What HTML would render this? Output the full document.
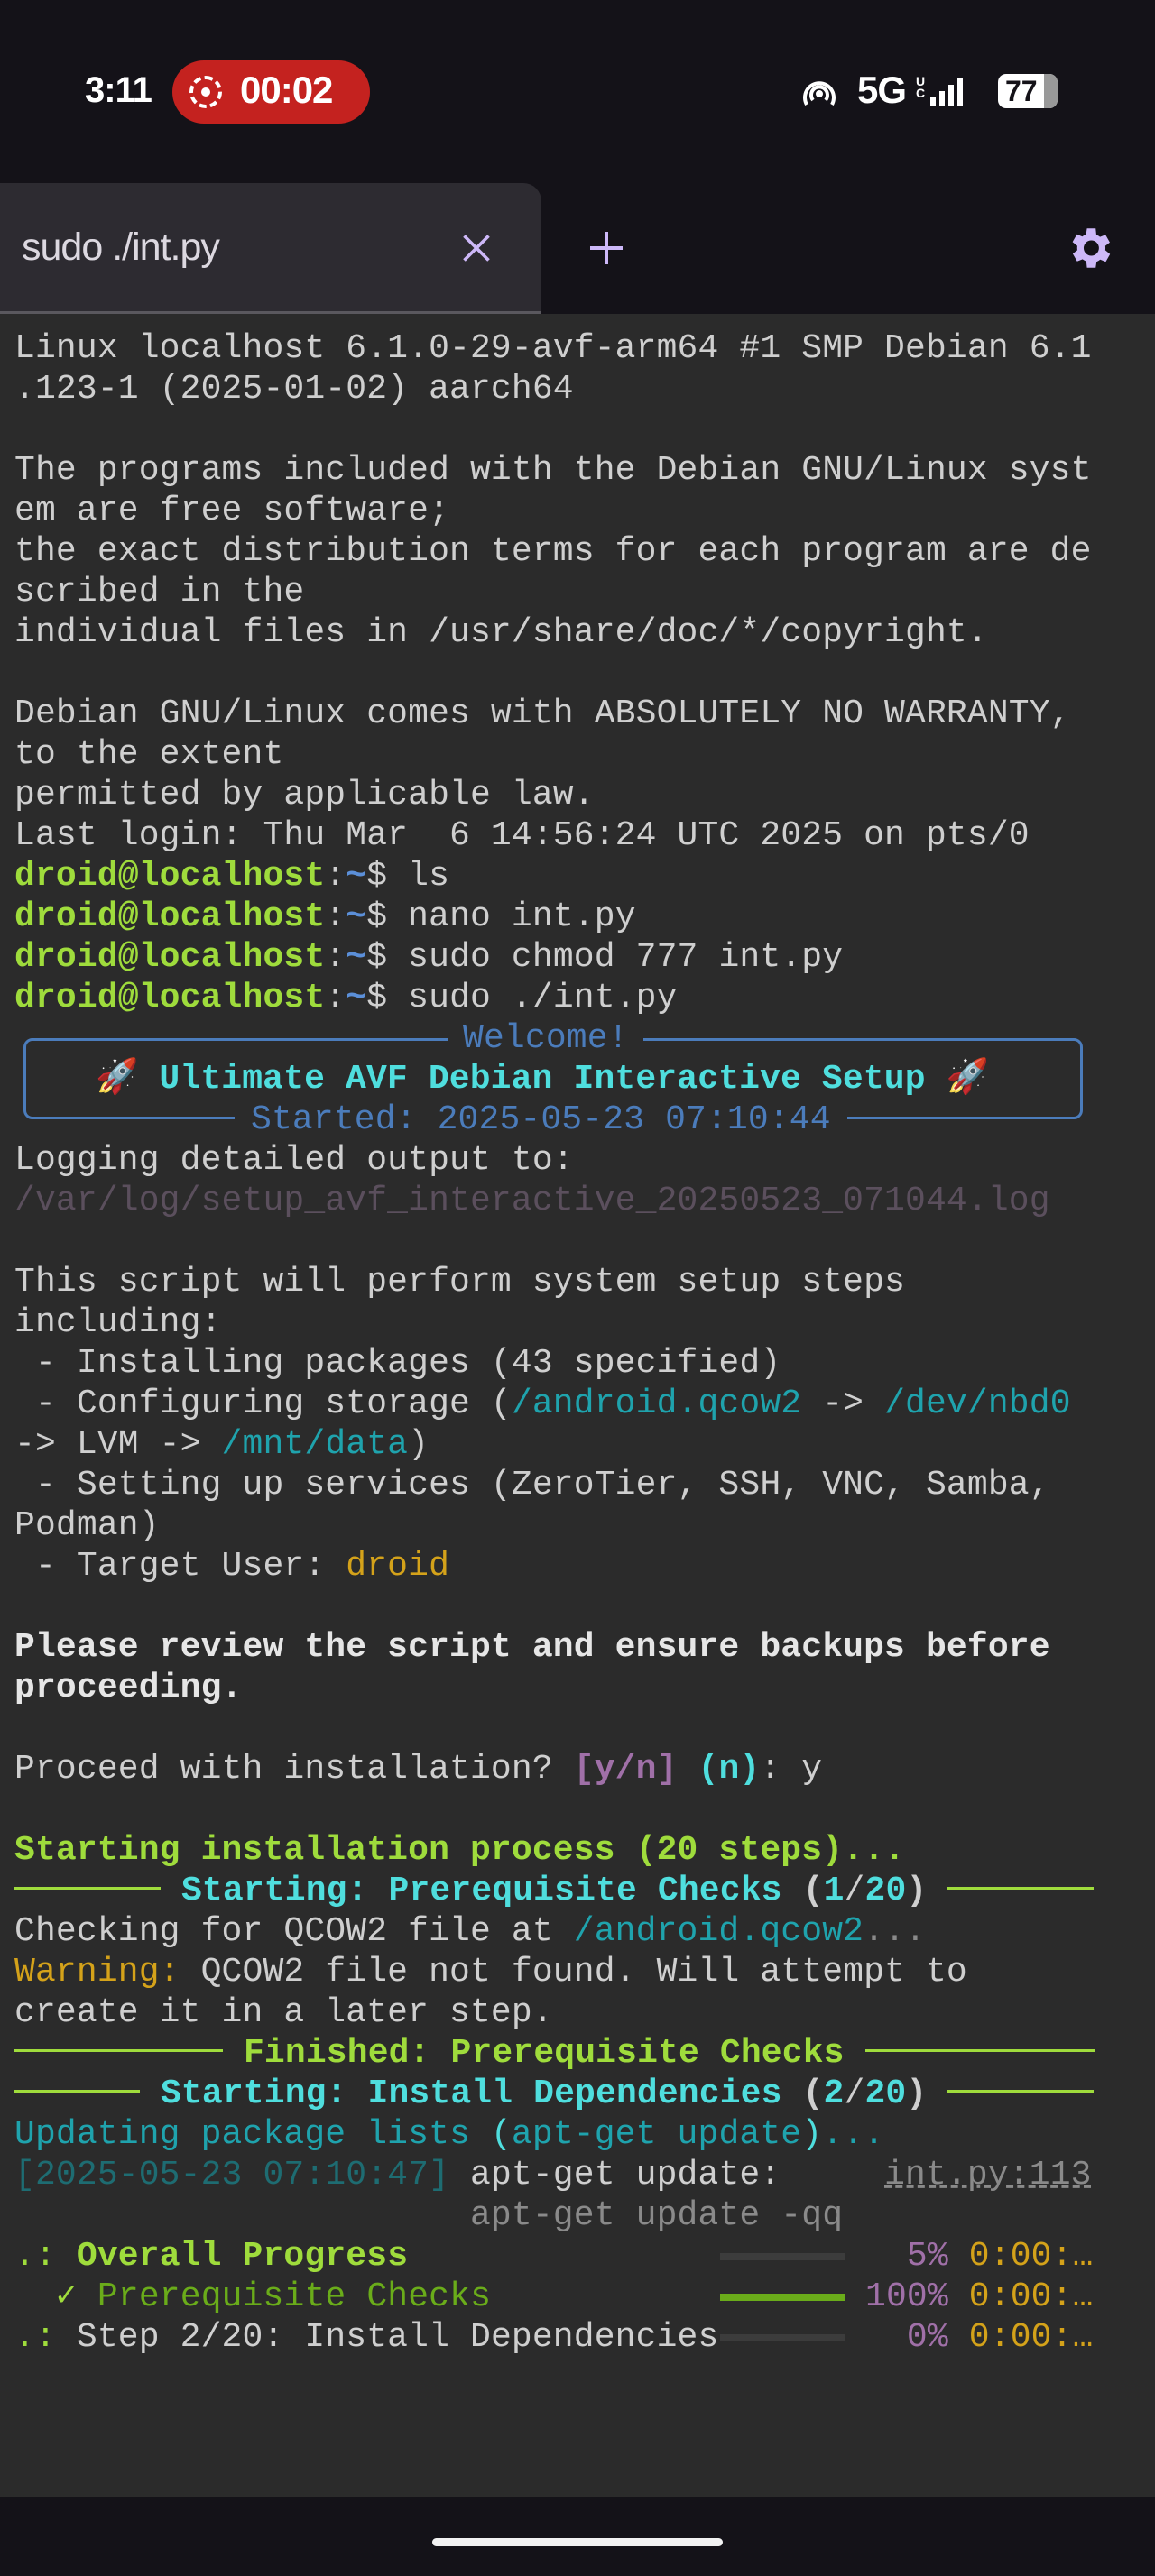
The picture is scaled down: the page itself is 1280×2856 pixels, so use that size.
<!DOCTYPE html>
<html><head><meta charset="utf-8"><style>
*{margin:0;padding:0;box-sizing:border-box}
body{width:1280px;height:2856px;background:#141218;position:relative;overflow:hidden;font-family:"Liberation Mono",monospace}
.term{position:absolute;left:0;top:348px;width:1280px;height:2420px;background:#2b2b2b}
.lines{position:absolute;left:16px;top:16px;}
.l{height:45px;line-height:45px;font-size:38px;letter-spacing:0.15px;white-space:pre;color:#cfcfcf;position:relative;width:1200px}
.g{color:#9fdc3c}.b{font-weight:bold}.c{color:#4fdede}.t{color:#1fa3ad}.y{color:#d4a21a}.p{color:#a070a8}.d{color:#5b4f5d}.bl{color:#4b7cbb}.dg{color:#8a8a8a}.dt{color:#1e6c72}.gg{color:#6aac1a}
.rule{display:inline-block;height:3px;background:#9fdc3c;vertical-align:middle;position:relative;top:-2px}
.bar{position:absolute;top:19px;left:782px;width:138px;height:8px;background:#3c3c3c}
</style></head><body>
<!-- status bar -->
<div style="position:absolute;left:94px;top:78px;font:bold 40px 'Liberation Sans',sans-serif;color:#fff;letter-spacing:-1px">3:11</div>
<div style="position:absolute;left:191px;top:67px;width:219px;height:70px;border-radius:35px;background:#c4221f"></div>
<div style="position:absolute;left:210px;top:84px;width:36px;height:36px;border-radius:50%;border:4px dashed #fff"></div>
<div style="position:absolute;left:223px;top:97px;width:10px;height:10px;border-radius:50%;background:#fff"></div>
<div style="position:absolute;left:266px;top:76px;font:bold 42px 'Liberation Sans',sans-serif;color:#fff;letter-spacing:-1px">00:02</div>
<svg style="position:absolute;left:888px;top:82px" width="40" height="40" viewBox="0 0 40 40" fill="none" stroke="#fff" stroke-width="4"><path d="M6 34A16 16 0 1 1 34 34"/><path d="M13 29A9 9 0 1 1 27 29"/><circle cx="20" cy="22" r="2" fill="#fff"/></svg>
<div style="position:absolute;left:950px;top:76px;font:bold 42px 'Liberation Sans',sans-serif;color:#fff;letter-spacing:-1px">5G</div>
<div style="position:absolute;left:1015px;top:84px;font:bold 14px 'Liberation Sans';color:#fff;line-height:13px">U<br>C</div>
<div style="position:absolute;left:1031px;top:108px;width:6px;height:10px;background:#fff"></div>
<div style="position:absolute;left:1041px;top:101px;width:6px;height:17px;background:#fff"></div>
<div style="position:absolute;left:1051px;top:94px;width:6px;height:24px;background:#fff"></div>
<div style="position:absolute;left:1061px;top:86px;width:6px;height:32px;background:#fff"></div>
<div style="position:absolute;left:1106px;top:82px;width:66px;height:38px;border-radius:9px;background:#fff;font:bold 32px 'Liberation Sans';color:#141218;padding-left:8px;line-height:38px">77</div>
<div style="position:absolute;left:1157px;top:82px;width:15px;height:38px;border-radius:0 9px 9px 0;background:#999"></div>
<!-- tab -->
<div style="position:absolute;left:0;top:203px;width:600px;height:145px;background:#2d2b31;border-radius:0 20px 0 0;border-bottom:3px solid #5a585e"></div>
<div style="position:absolute;left:24px;top:250px;font:43px 'Liberation Sans',sans-serif;color:#dcd8e0;letter-spacing:-1px">sudo ./int.py</div>
<svg style="position:absolute;left:510px;top:257px" width="36" height="36" viewBox="0 0 40 40" stroke="#cdb8f8" stroke-width="4"><path d="M5 5L35 35M35 5L5 35"/></svg>
<svg style="position:absolute;left:652px;top:255px" width="40" height="40" viewBox="0 0 40 40" stroke="#cdb8f8" stroke-width="4"><path d="M20 2V38M2 20H38"/></svg>
<svg style="position:absolute;left:1178px;top:246px" width="58" height="58" viewBox="0 0 24 24"><path fill="#cdb8f8" fill-rule="evenodd" d="M19.4 13a7.5 7.5 0 0 0 0-2l2.1-1.6-2-3.5-2.5 1a7 7 0 0 0-1.7-1L15 3h-4l-.4 2.7a7 7 0 0 0-1.7 1l-2.5-1-2 3.5L6.6 11a7.5 7.5 0 0 0 0 2l-2.1 1.6 2 3.5 2.5-1a7 7 0 0 0 1.7 1L11 21h4l.4-2.7a7 7 0 0 0 1.7-1l2.5 1 2-3.5zM13 15.5a3.5 3.5 0 1 1 0-7 3.5 3.5 0 0 1 0 7z"/></svg>
<!-- terminal -->
<div class="term"><div class="lines">
<div class="l">Linux localhost 6.1.0-29-avf-arm64 #1 SMP Debian 6.1</div>
<div class="l">.123-1 (2025-01-02) aarch64</div>
<div class="l"> </div>
<div class="l">The programs included with the Debian GNU/Linux syst</div>
<div class="l">em are free software;</div>
<div class="l">the exact distribution terms for each program are de</div>
<div class="l">scribed in the</div>
<div class="l">individual files in /usr/share/doc/*/copyright.</div>
<div class="l"> </div>
<div class="l">Debian GNU/Linux comes with ABSOLUTELY NO WARRANTY,</div>
<div class="l">to the extent</div>
<div class="l">permitted by applicable law.</div>
<div class="l">Last login: Thu Mar  6 14:56:24 UTC 2025 on pts/0</div>
<div class="l"><span class="g b">droid@localhost</span>:<span class="b" style="color:#5b8fd8">~</span>$ ls</div>
<div class="l"><span class="g b">droid@localhost</span>:<span class="b" style="color:#5b8fd8">~</span>$ nano int.py</div>
<div class="l"><span class="g b">droid@localhost</span>:<span class="b" style="color:#5b8fd8">~</span>$ sudo chmod 777 int.py</div>
<div class="l"><span class="g b">droid@localhost</span>:<span class="b" style="color:#5b8fd8">~</span>$ sudo ./int.py</div>
<div style="position:relative;height:135px">
 <div style="position:absolute;left:10px;top:22px;width:1174px;height:90px;border:3px solid #4b7cbb;border-radius:10px"></div>
 <div class="l bl" style="position:absolute;left:481px;top:0;width:auto;background:#2b2b2b;padding:0 16px">Welcome!</div>
 <div class="l c b" style="position:absolute;left:90px;top:45px;width:auto">🚀 Ultimate AVF Debian Interactive Setup 🚀</div>
 <div class="l bl" style="position:absolute;left:244px;top:90px;width:auto;background:#2b2b2b;padding:0 18px">Started: 2025-05-23 07:10:44</div>
</div>
<div class="l">Logging detailed output to:</div>
<div class="l d">/var/log/setup_avf_interactive_20250523_071044.log</div>
<div class="l"> </div>
<div class="l">This script will perform system setup steps</div>
<div class="l">including:</div>
<div class="l"> - Installing packages (43 specified)</div>
<div class="l"> - Configuring storage (<span class="t">/android.qcow2</span> -&gt; <span class="t">/dev/nbd0</span></div>
<div class="l">-&gt; LVM -&gt; <span class="t">/mnt/data</span>)</div>
<div class="l"> - Setting up services (ZeroTier, SSH, VNC, Samba,</div>
<div class="l">Podman)</div>
<div class="l"> - Target User: <span class="y">droid</span></div>
<div class="l"> </div>
<div class="l b" style="color:#e6e6e6">Please review the script and ensure backups before</div>
<div class="l b" style="color:#e6e6e6">proceeding.</div>
<div class="l"> </div>
<div class="l">Proceed with installation? <span class="p b">[y/n]</span> <span class="c b">(n)</span>: y</div>
<div class="l"> </div>
<div class="l g b">Starting installation process (20 steps)...</div>
<div class="l"><span class="rule" style="width:162px"></span> <span class="c b">Starting: Prerequisite Checks </span><span class="b">(</span><span class="c b">1</span>/<span class="c b">20</span><span class="b">)</span> <span class="rule" style="width:162px"></span></div>
<div class="l">Checking for QCOW2 file at <span class="t">/android.qcow2</span><span class="dg">...</span></div>
<div class="l"><span class="y">Warning:</span> QCOW2 file not found. Will attempt to</div>
<div class="l">create it in a later step.</div>
<div class="l"><span class="rule" style="width:231px"></span> <span class="g b">Finished: Prerequisite Checks</span> <span class="rule" style="width:254px"></span></div>
<div class="l"><span class="rule" style="width:139px"></span> <span class="c b">Starting: Install Dependencies </span><span class="b">(</span><span class="c b">2</span>/<span class="c b">20</span><span class="b">)</span> <span class="rule" style="width:162px"></span></div>
<div class="l"><span class="t">Updating package lists </span><span class="c">(</span><span class="t">apt-get update</span><span class="c">)</span><span class="t">...</span></div>
<div class="l"><span class="dt">[2025-05-23 07:10:47]</span> apt-get update:     <span class="dg" style="text-decoration:underline dashed">int.py:113</span></div>
<div class="l dg">                      apt-get update -qq</div>
<div class="l"><span class="g">.:</span> <span class="g b">Overall Progress</span><div class="bar"></div><span style="position:absolute;left:943px"><span class="p">  5%</span> <span class="y">0:00:…</span></span></div>
<div class="l">  <span class="g b">✓</span> <span class="gg">Prerequisite Checks</span><div class="bar" style="background:#6aac1a"></div><span style="position:absolute;left:943px"><span class="p">100%</span> <span class="y">0:00:…</span></span></div>
<div class="l"><span class="g">.:</span> Step 2/20: Install Dependencies<div class="bar"></div><span style="position:absolute;left:943px"><span class="p">  0%</span> <span class="y">0:00:…</span></span></div>
</div></div>
<div style="position:absolute;left:479px;top:2814px;width:322px;height:9px;border-radius:5px;background:#f2f2f2"></div>
</body></html>
